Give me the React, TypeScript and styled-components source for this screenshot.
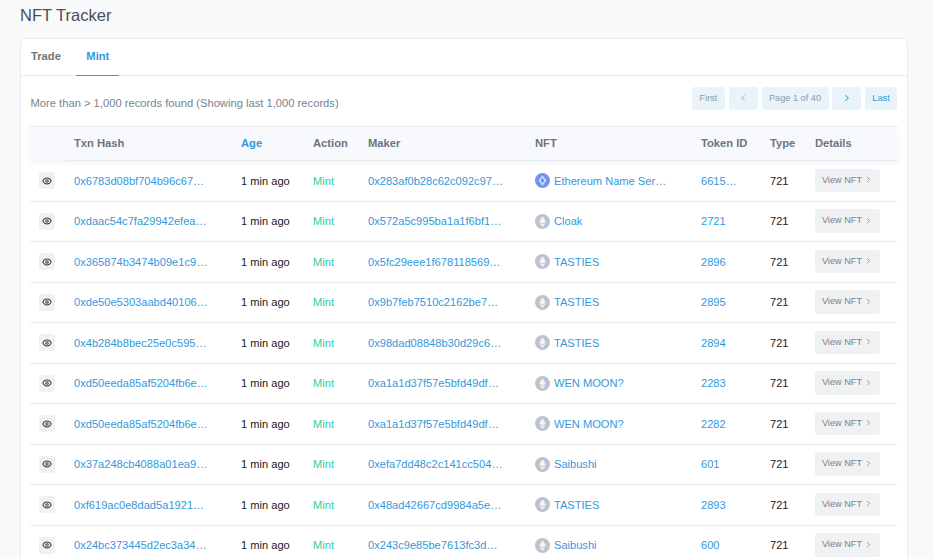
import React from 'react';
import styled, { createGlobalStyle } from 'styled-components';
import { Eye, ChevronLeft, ChevronRight } from 'lucide-react';

const GlobalStyle = createGlobalStyle`
  html, body {
    margin: 0;
    height: 100%;
    overflow: hidden;
    background: #f8f9fb;
    font-family: "Liberation Sans", Arial, sans-serif;
  }
`

const columns = '44px 167px 72px 55px 167px 166px 69px 45px 82px';

const Page = styled.div`
  height: 559px;
  overflow: hidden;
  padding: 6px 26px 0 20px;
`

const Title = styled.h1`
  margin: 0 0 13px;
  font-size: 16.5px;
  line-height: 19px;
  font-weight: 400;
  color: #4a4f55;
`

const Card = styled.div`
  background: #fff;
  border: 1px solid #e7eaf3;
  border-radius: 6px;
  margin-right: -1px;
  height: 600px;
`

const Tabs = styled.div`
  display: flex;
  height: 36px;
  padding-left: 0.5px;
  border-bottom: 1px solid #e7eaf3;
`

const Tab = styled.div<{ $active?: boolean }>`
  display: flex;
  align-items: center;
  padding: 0 ${p => (p.$active ? '10px' : '9.5px')} 2px;
  margin-right: ${p => (p.$active ? 0 : '6px')};
  margin-bottom: -1px;
  font-size: 11.2px;
  font-weight: 700;
  color: ${p => (p.$active ? '#3498db' : '#6c757e')};
  border-bottom: 1px solid ${p => (p.$active ? '#3498db' : 'transparent')};
`

const Body = styled.div`
  padding: 10px 10px 0 9px;
`

const TopBar = styled.div`
  display: flex;
  justify-content: space-between;
  align-items: center;
  height: 24px;
  margin-bottom: 16px;
`

const Records = styled.div`
  font-size: 11.2px;
  color: #77838f;
  padding: 10px 0 0 0.5px;
`

const Pager = styled.div`
  display: flex;
  gap: 3.75px;
`

const PageBtn = styled.div<{ $on?: boolean; $w: number }>`
  display: flex;
  align-items: center;
  justify-content: center;
  width: ${p => p.$w}px;
  height: 23px;
  border-radius: 3px;
  background: #e8f3fa;
  font-size: 9.2px;
  color: ${p => (p.$on ? '#3498db' : '#8f9aa5')};
`

const HeadRow = styled.div`
  display: grid;
  grid-template-columns: ${columns};
  align-items: center;
  height: 34px;
  padding-bottom: 1px;
  box-sizing: border-box;
  background: #f8f9fd;
  border-top: 1px solid #e7eaf3;
  box-shadow: 0 3px 6px rgba(150, 160, 180, 0.12);
`

const HeadCell = styled.div<{ $on?: boolean }>`
  font-size: 11.2px;
  font-weight: 700;
  color: ${p => (p.$on ? '#3498db' : '#6c757e')};
`

const HeadLine = styled.div`
  height: 1px;
  margin-left: 36px;
  background: #e7eaf3;
`

const Row = styled.div`
  display: grid;
  grid-template-columns: ${columns};
  align-items: center;
  height: 40.5px;
  box-sizing: border-box;
  border-bottom: 1px solid #e7eaf3;
  font-size: 11.1px;
  color: #1e2022;
`

const EyeBtn = styled.div`
  display: flex;
  align-items: center;
  justify-content: center;
  width: 16px;
  height: 17px;
  margin-left: 9px;
  border-radius: 3px;
  background: #f0f1f3;
  color: #3b4046;
`

const Link = styled.div`
  color: #3498db;
  overflow: hidden;
  white-space: nowrap;
  text-overflow: ellipsis;
`

const HashLink = styled(Link)`
  width: 135.5px;
`

const TokenLink = styled(Link)`
  width: 37px;
`

const Mint = styled.div`
  color: #2ecda7;
`

const NftCell = styled.div`
  display: flex;
  align-items: center;
  gap: 4px;
`

const NftName = styled(Link)`
  max-width: 114px;
`

const ViewBtn = styled.div`
  display: flex;
  align-items: center;
  justify-content: center;
  gap: 2px;
  width: 65px;
  height: 23.5px;
  margin-top: -1px;
  padding-bottom: 1px;
  box-sizing: border-box;
  border-radius: 3px;
  background: #f0f1f3;
  font-size: 9.2px;
  color: #77838f;
`

const EthIcon = ({ ens }: { ens?: boolean }) => (
  <svg width="15" height="15" viewBox="0 0 15 15">
    <circle cx="7.5" cy="7.5" r="7.5" fill={ens ? '#6d95f5' : '#bcc3cf'} />
    {ens ? (
      <path d="M7.5 2.6 L11.4 7.5 L7.5 12.4 L3.6 7.5 Z M7.5 4.6 L5.3 7.5 L7.5 10.4 L9.7 7.5 Z" fill="#dfe8fd" fillRule="evenodd" />
    ) : (
      <>
        <path d="M7.5 2.2 L10.8 7.6 L7.5 9.5 L4.2 7.6 Z" fill="#f3f4f6" />
        <path d="M4.2 8.4 L7.5 10.3 L10.8 8.4 L7.5 12.9 Z" fill="#f3f4f6" />
      </>
    )}
  </svg>
)

const rows = [
  ['0x6783d08bf704b96c67e2f1', '0x283af0b28c62c092c97ab4', 'Ethereum Name Service', '66150283', true],
  ['0xdaac54c7fa29942efea8b1c', '0x572a5c995ba1a1f6bf1a90', 'Cloak', '2721'],
  ['0x365874b3474b09e1c97d3a', '0x5fc29eee1f678118569a3d', 'TASTIES', '2896'],
  ['0xde50e5303aabd40106e7f2', '0x9b7feb7510c2162be7a1c4', 'TASTIES', '2895'],
  ['0x4b284b8bec25e0c595a1d7', '0x98dad08848b30d29c6f2e1', 'TASTIES', '2894'],
  ['0xd50eeda85af5204fb6e3a1', '0xa1a1d37f57e5bfd49df0b2', 'WEN MOON?', '2283'],
  ['0xd50eeda85af5204fb6e3a1', '0xa1a1d37f57e5bfd49df0b2', 'WEN MOON?', '2282'],
  ['0x37a248cb4088a01ea9c4d2', '0xefa7dd48c2c141cc504e7f', 'Saibushi', '601'],
  ['0xf619ac0e8dad5a1921b3c7', '0x48ad42667cd9984a5e0f1a', 'TASTIES', '2893'],
  ['0x24bc373445d2ec3a34e8f0', '0x243c9e85be7613fc3da2b', 'Saibushi', '600'],
] as [string, string, string, string, boolean?][];

const App = () => {
  return (
    <Page>
      <GlobalStyle />
      <Title>NFT Tracker</Title>
      <Card>
        <Tabs>
          <Tab>Trade</Tab>
          <Tab $active>Mint</Tab>
        </Tabs>
        <Body>
          <TopBar>
            <Records>More than &gt; 1,000 records found (Showing last 1,000 records)</Records>
            <Pager>
              <PageBtn $w={33}>First</PageBtn>
              <PageBtn $w={29}><ChevronLeft size={10} /></PageBtn>
              <PageBtn $w={67}>Page 1 of 40</PageBtn>
              <PageBtn $w={29} $on><ChevronRight size={10} strokeWidth={2.5} /></PageBtn>
              <PageBtn $w={32} $on>Last</PageBtn>
            </Pager>
          </TopBar>
          <HeadRow>
            <div />
            <HeadCell>Txn Hash</HeadCell>
            <HeadCell $on>Age</HeadCell>
            <HeadCell>Action</HeadCell>
            <HeadCell>Maker</HeadCell>
            <HeadCell>NFT</HeadCell>
            <HeadCell>Token ID</HeadCell>
            <HeadCell>Type</HeadCell>
            <HeadCell>Details</HeadCell>
          </HeadRow>
          <HeadLine />
          {rows.map((r, i) => (
            <Row key={i}>
              <EyeBtn><Eye size={10} strokeWidth={2.5} /></EyeBtn>
              <HashLink>{r[0]}</HashLink>
              <div>1 min ago</div>
              <Mint>Mint</Mint>
              <HashLink>{r[1]}</HashLink>
              <NftCell>
                <EthIcon ens={r[4]} />
                <NftName>{r[2]}</NftName>
              </NftCell>
              <TokenLink>{r[3]}</TokenLink>
              <div>721</div>
              <ViewBtn>View NFT <ChevronRight size={9} /></ViewBtn>
            </Row>
          ))}
        </Body>
      </Card>
    </Page>
  );
}

export default App;
